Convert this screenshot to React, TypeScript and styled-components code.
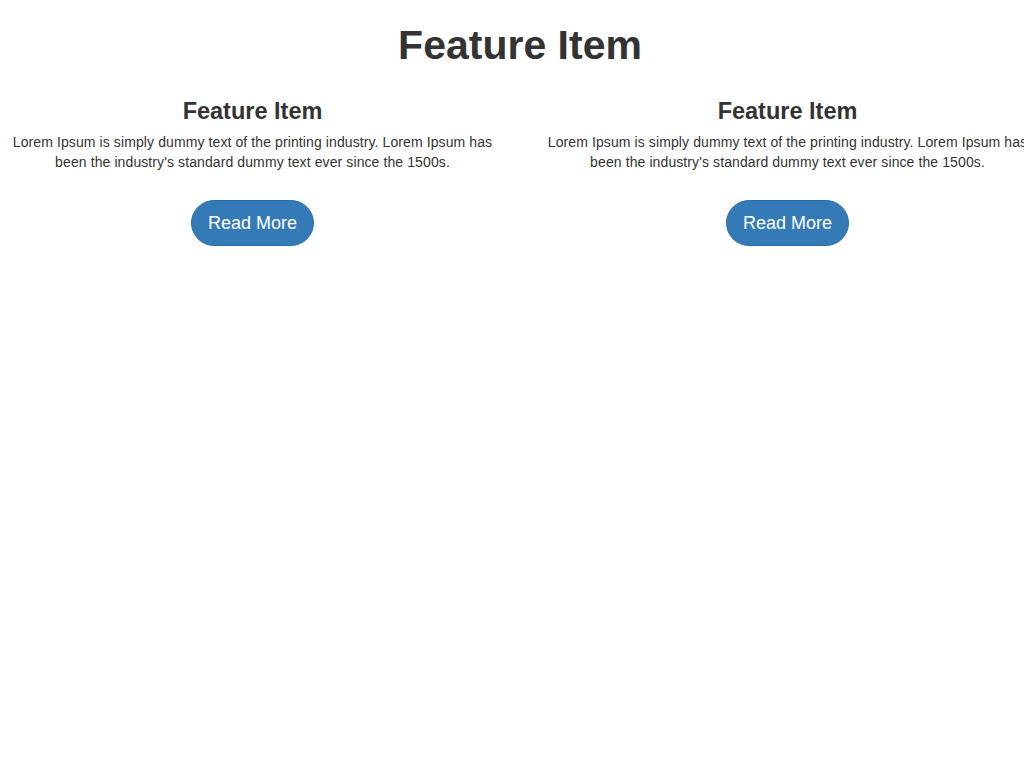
import React from "react";
import styled, { createGlobalStyle } from "styled-components";

const Global = createGlobalStyle`
  html, body {
    margin: 0;
    padding: 0;
    background: #fff;
    overflow-x: hidden;
  }
  body {
    font-family: "Liberation Sans", Arial, Helvetica, sans-serif;
    font-size: 14px;
    line-height: 20px;
    color: #333;
  }
`;

const Container = styled.div`
  width: 1070px;
  margin-left: -15px;
`;

const Title = styled.h1`
  margin: 22px 0 0;
  font-size: 41px;
  line-height: 46px;
  font-weight: 700;
  text-align: center;
  color: #333;
`;

const Row = styled.div`
  display: grid;
  grid-template-columns: 1fr 1fr;
  margin-top: 30px;
`;

const Feature = styled.div`
  padding: 0 15px;
  display: flex;
  flex-direction: column;
  align-items: center;
  text-align: center;
`;

const FeatureTitle = styled.h3`
  margin: 0 0 8px;
  font-size: 23.5px;
  line-height: 26px;
  font-weight: 700;
  color: #333;
`;

const Text = styled.p`
  margin: 0;
  font-size: 14px;
  line-height: 20px;
  letter-spacing: 0.1px;
`;

const Button = styled.a`
  display: inline-block;
  margin-top: 28px;
  padding: 10px 16px;
  font-size: 18px;
  line-height: 24px;
  color: #fff;
  background: #337ab7;
  border: 1px solid #2e6da4;
  border-radius: 24px;
  text-decoration: none;
  cursor: pointer;
`;

const items = [1, 2];

export default function App() {
  return (
    <>
      <Global />
      <Container>
        <Title>Feature Item</Title>
        <Row>
          {items.map((i) => (
            <Feature key={i}>
              <FeatureTitle>Feature Item</FeatureTitle>
              <Text>
                Lorem Ipsum is simply dummy text of the printing industry. Lorem Ipsum has
                been the industry's standard dummy text ever since the 1500s.
              </Text>
              <Button>Read More</Button>
            </Feature>
          ))}
        </Row>
      </Container>
    </>
  );
}
